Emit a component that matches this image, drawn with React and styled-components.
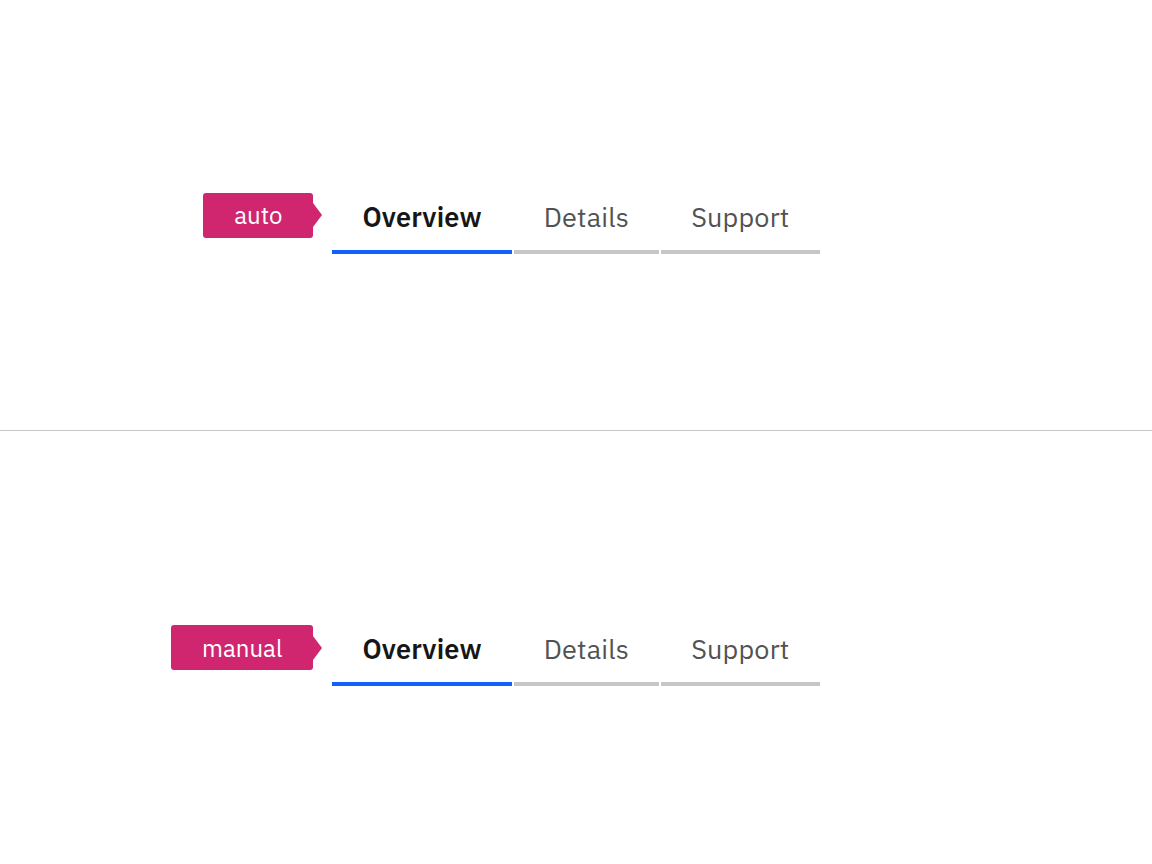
import React, { useState } from "react";
import styled, { createGlobalStyle } from "styled-components";

const Global = createGlobalStyle`
  html, body { margin: 0; padding: 0; background: #ffffff; }
  body { font-family: "IBM Plex Sans", Inter, "Noto Sans", sans-serif; }
  * { box-sizing: border-box; }
`;

const Page = styled.div`
  width: 1152px;
  height: 864px;
  display: flex;
  flex-direction: column;
`;

const Section = styled.section`
  height: ${(p) => p.$h}px;
  display: flex;
  align-items: center;
  justify-content: center;
  border-bottom: ${(p) => (p.$divider ? "1px solid #c6c6c6" : "none")};
`;

const TabList = styled.div`
  position: relative;
  display: flex;
  gap: 2px;
`;

const Badge = styled.div`
  position: absolute;
  right: calc(100% + 19px);
  top: 16px;
  height: 45px;
  padding: 0 31px;
  display: flex;
  align-items: center;
  background: #d02670;
  color: #ffffff;
  border-radius: 3px;
  font-size: 24px;
  white-space: nowrap;
  &::after {
    content: "";
    position: absolute;
    left: 100%;
    top: 50%;
    transform: translateY(-50%);
    border-left: 9px solid #d02670;
    border-top: 12.5px solid transparent;
    border-bottom: 12.5px solid transparent;
  }
`;

const Tab = styled.button`
  height: 77px;
  padding: 6px 30px 0;
  display: flex;
  align-items: center;
  background: none;
  border: none;
  border-bottom: 4px solid ${(p) => (p.$active ? "#0f62fe" : "#c6c6c6")};
  font-family: inherit;
  font-size: 27px;
  font-weight: ${(p) => (p.$active ? 600 : 400)};
  color: ${(p) => (p.$active ? "#161616" : "#525252")};
  cursor: pointer;
  letter-spacing: 0.2px;
`;

const tabs = ["Overview", "Details", "Support"];

function Tabs({ label }) {
  const [active, setActive] = useState(0);
  return (
    <TabList role="tablist">
      <Badge>{label}</Badge>
      {tabs.map((t, i) => (
        <Tab key={t} role="tab" $active={i === active} onClick={() => setActive(i)}>
          {t}
        </Tab>
      ))}
    </TabList>
  );
}

export default function App() {
  return (
    <Page>
      <Global />
      <Section $h={431} $divider>
        <Tabs label="auto" />
      </Section>
      <Section $h={433}>
        <Tabs label="manual" />
      </Section>
    </Page>
  );
}
